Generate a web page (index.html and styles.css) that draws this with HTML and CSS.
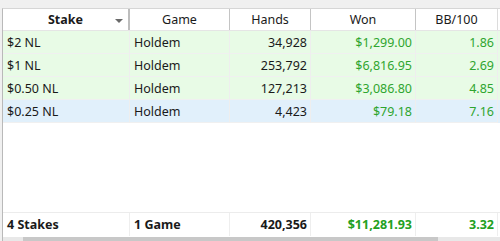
FILE: index.html
```html
<!DOCTYPE html>
<html>
<head>
<meta charset="utf-8">
<link rel="stylesheet" href="styles.css">
</head>
<body>
<div class="frame">
  <div class="grid">
    <div class="row head">
      <div class="cell c-stake">Stake<span class="sort"></span></div>
      <div class="cell c-game">Game</div>
      <div class="cell c-hands">Hands</div>
      <div class="cell c-won">Won</div>
      <div class="cell c-bb">BB/100</div>
    </div>
    <div class="row data green">
      <div class="cell l">$2 NL</div>
      <div class="cell l">Holdem</div>
      <div class="cell r">34,928</div>
      <div class="cell r pos">$1,299.00</div>
      <div class="cell r pos">1.86</div>
    </div>
    <div class="row data green">
      <div class="cell l">$1 NL</div>
      <div class="cell l">Holdem</div>
      <div class="cell r">253,792</div>
      <div class="cell r pos">$6,816.95</div>
      <div class="cell r pos">2.69</div>
    </div>
    <div class="row data green">
      <div class="cell l">$0.50 NL</div>
      <div class="cell l">Holdem</div>
      <div class="cell r">127,213</div>
      <div class="cell r pos">$3,086.80</div>
      <div class="cell r pos">4.85</div>
    </div>
    <div class="row data blue">
      <div class="cell l">$0.25 NL</div>
      <div class="cell l">Holdem</div>
      <div class="cell r">4,423</div>
      <div class="cell r pos">$79.18</div>
      <div class="cell r pos">7.16</div>
    </div>
    <div class="spacer"></div>
    <div class="row foot">
      <div class="cell l">4 Stakes</div>
      <div class="cell l">1 Game</div>
      <div class="cell r">420,356</div>
      <div class="cell r pos">$11,281.93</div>
      <div class="cell r pos">3.32</div>
    </div>
  </div>
  <div class="hscroll"><div class="thumb"></div></div>
</div>
</body>
</html>
```
FILE: styles.css
```css
html, body {
  margin: 0;
  padding: 0;
  background: #f0f0f0;
}
body {
  width: 500px;
  height: 241px;
  overflow: hidden;
  font-family: "Noto Sans", "Open Sans", sans-serif;
  font-size: 12.5px;
  color: #1a1a1a;
}
.frame {
  margin: 8px 0 0 2px;
  height: 233px;
  display: flex;
  flex-direction: column;
  border-left: 1px solid #b9b9b9;
  border-top: 1px solid #d6d6d6;
  background: #ffffff;
}
.grid {
  flex: 1;
  display: flex;
  flex-direction: column;
}
.row {
  display: grid;
  grid-template-columns: 127px 100px 81px 105px 82px;
}
.cell {
  white-space: nowrap;
  overflow: hidden;
  line-height: 22px;
}
.head {
  height: 21px;
  border-bottom: 1px solid #e5e5e5;
  background: #ffffff;
}
.head .cell {
  line-height: 21px;
  text-align: center;
  position: relative;
  border-right: 1px solid #c4c4c4;
}
.head .c-stake {
  font-weight: bold;
  border-right: 2px solid #bdbdbd;
}
.head .c-bb {
  border-right: 1px solid #dcdcdc;
}
.sort {
  position: absolute;
  right: 5px;
  top: 10px;
  width: 0;
  height: 0;
  border-left: 4px solid transparent;
  border-right: 4px solid transparent;
  border-top: 4px solid #6a6a6a;
}
.data {
  height: 23px;
}
.data .cell, .foot .cell {
  border-right: 1px solid #eeeeee;
  line-height: 23px;
}
.data .cell {
  border-bottom: 1px solid #f0f0f0;
  box-sizing: border-box;
}
.green { background: #e8fbe6; }
.blue { background: #e1f0fb; }
.l { padding-left: 4px; text-align: left; }
.r { padding-right: 3px; text-align: right; }
.pos { color: #2fa52f; }
.spacer { flex: 1; }
.foot {
  height: 23px;
  border-top: 1px solid #ececec;
  font-weight: bold;
  margin-bottom: 1px;
}
.foot .pos { color: #22a022; }
.hscroll {
  height: 5px;
  background: #e8e8e8;
  display: flex;
}
.thumb {
  margin-left: 20px;
  width: 415px;
  background: #c8c8c8;
}
```
